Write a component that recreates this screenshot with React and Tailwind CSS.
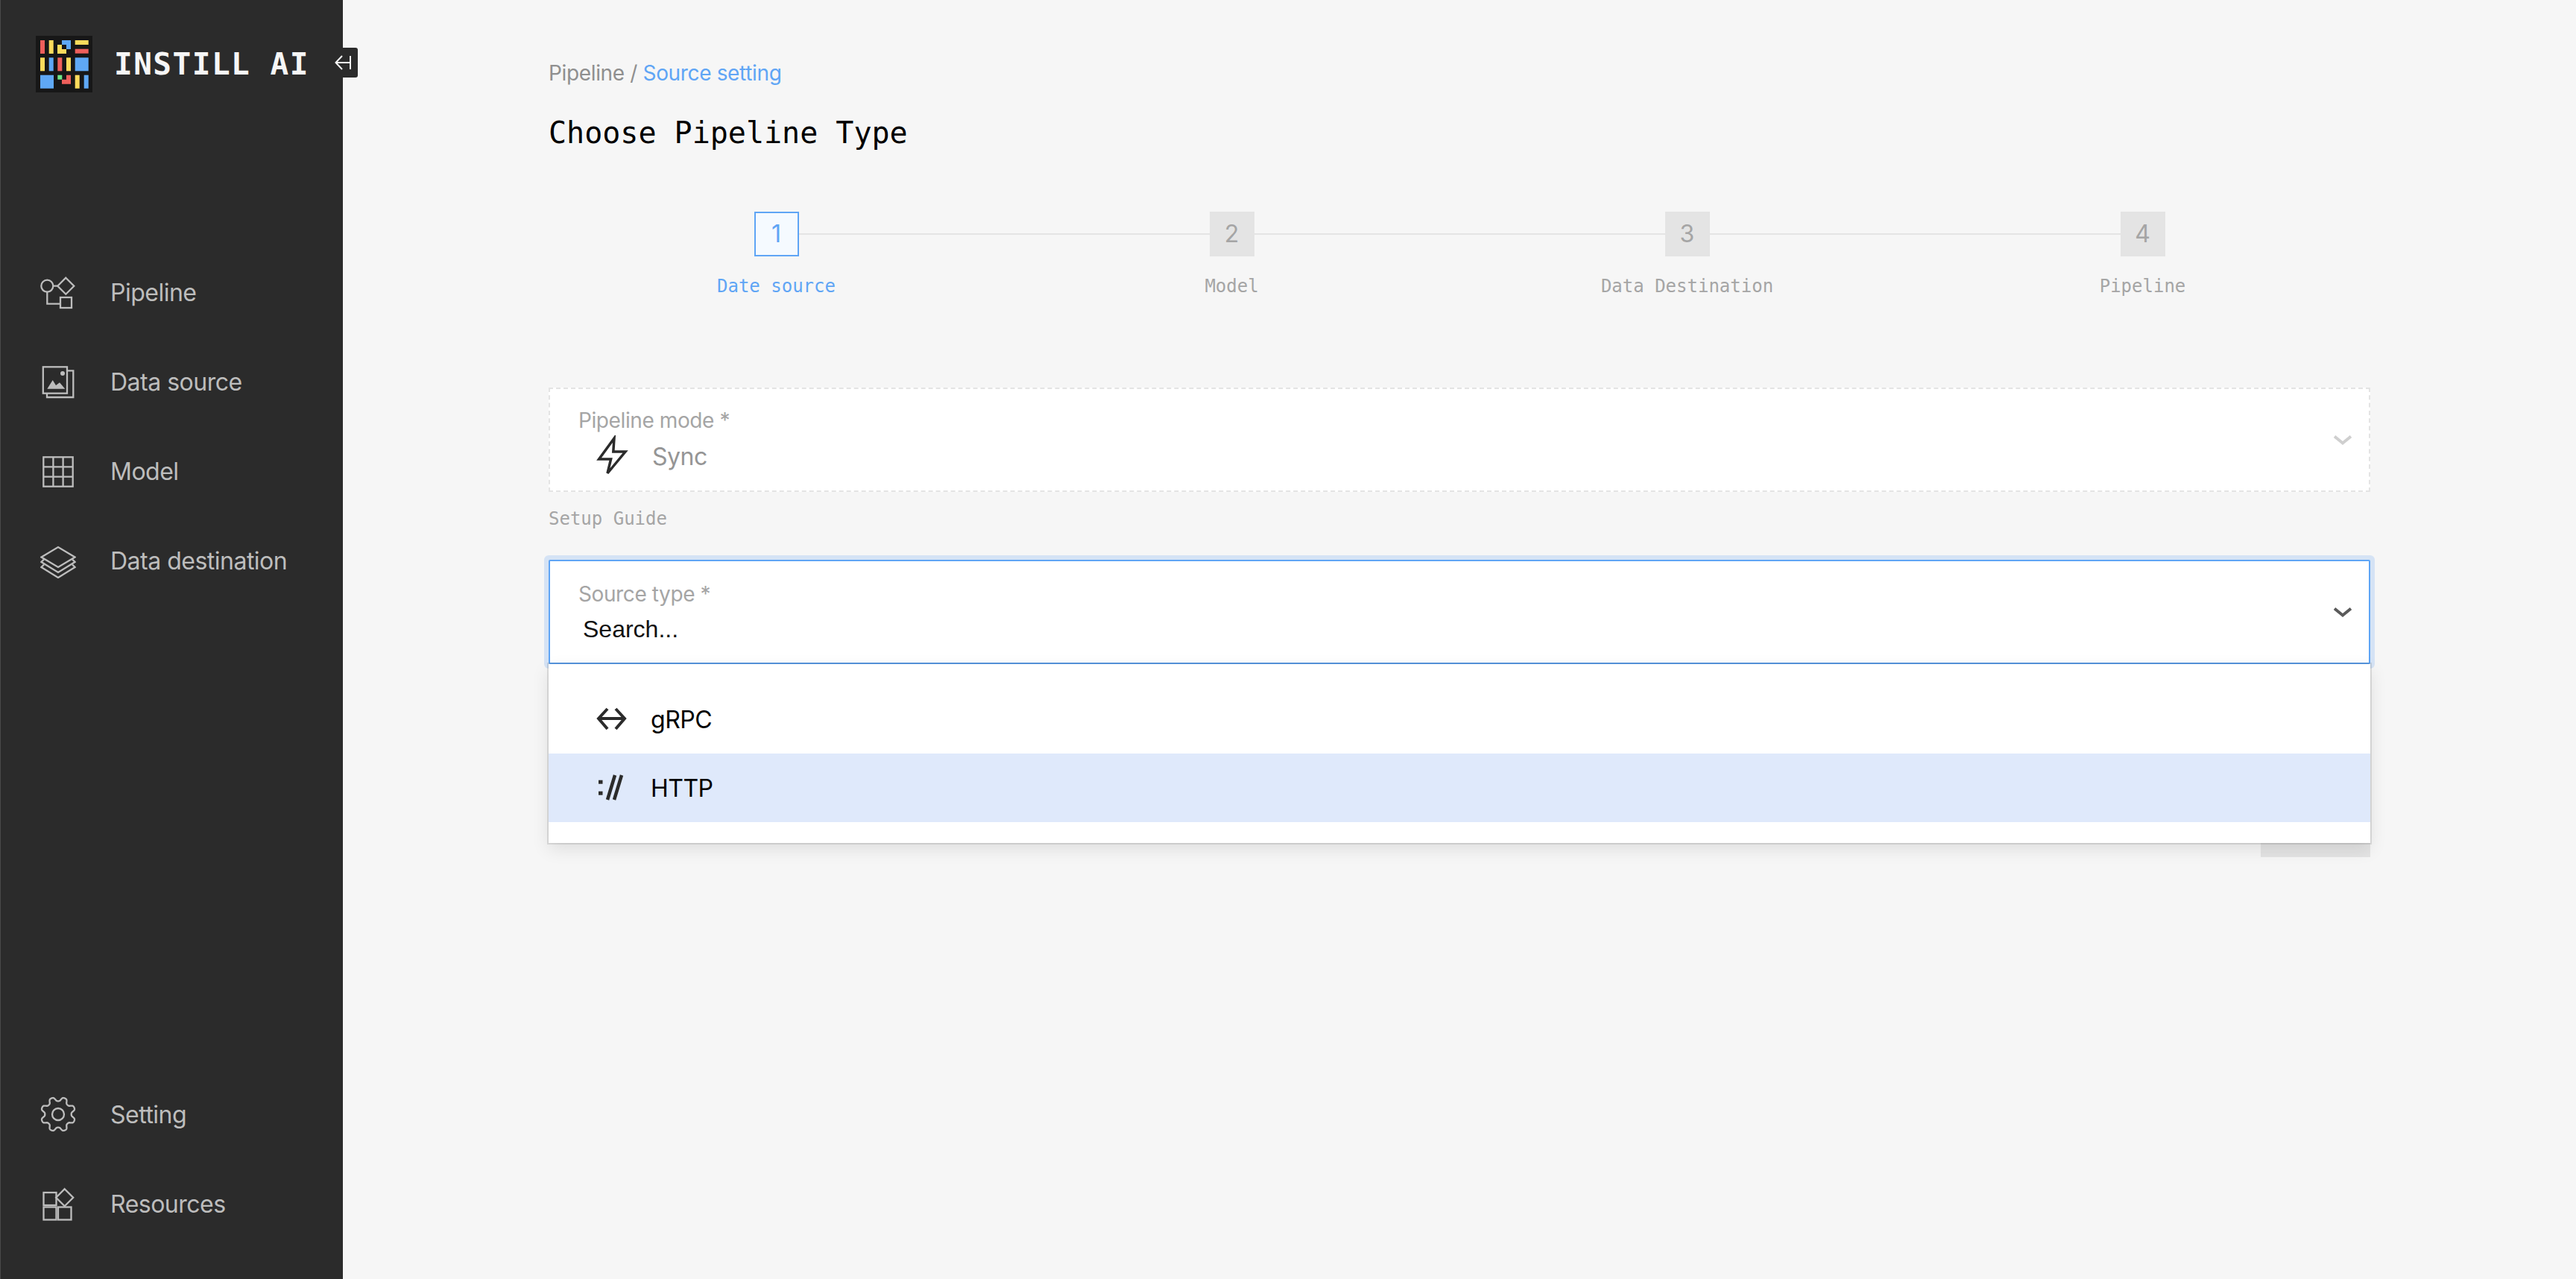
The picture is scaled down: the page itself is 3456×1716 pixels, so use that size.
import React from "react";

const gearPath = (() => {
  const pts = [];
  const teeth = 8;
  const total = 320;
  for (let i = 0; i < total; i++) {
    const t = (i / total) * Math.PI * 2;
    const a = t - Math.PI / 2;
    const wave = -Math.tanh(1.6 * Math.cos(teeth * t)) / Math.tanh(1.6);
    const r = 20.5 + 2.8 * wave;
    pts.push(`${(24 + r * Math.cos(a)).toFixed(2)} ${(24 + r * Math.sin(a)).toFixed(2)}`);
  }
  return `M${pts.join("L")}Z`;
})();

const Icon = ({ children }) => (
  <svg
    width="48"
    height="48"
    viewBox="0 0 48 48"
    fill="none"
    stroke="#bdbdbd"
    strokeWidth="2.3"
    className="shrink-0"
  >
    {children}
  </svg>
);

const PipelineIcon = () => (
  <Icon>
    <circle cx="9.3" cy="15.7" r="8" />
    <path d="M34.3 4.7L45.3 15.7L34.3 26.7L23.3 15.7Z" />
    <path d="M17.3 15.7H23.3M9.3 23.7V39.7H27" />
    <rect x="27" y="31" width="15" height="14" />
  </Icon>
);

const SourceIcon = () => (
  <Icon>
    <rect x="3.8" y="4.3" width="32.2" height="35.4" />
    <path d="M36 9.3H44.3V45H9V39.7" />
    <circle cx="30" cy="13" r="3" fill="#bdbdbd" stroke="none" />
    <path d="M9.3 33.7L16.7 22L21 29L26 25.3L33.3 33.7Z" fill="#bdbdbd" stroke="none" />
  </Icon>
);

const ModelIcon = () => (
  <Icon>
    <rect x="4.3" y="5.3" width="39.4" height="39.4" />
    <path d="M17.4 5.3V44.7M30.6 5.3V44.7M4.3 18.4H43.7M4.3 31.6H43.7" />
  </Icon>
);

const DestinationIcon = () => (
  <Icon>
    <path d="M1.5 19.5L24 6L46.5 19.5L24 33Z" />
    <path d="M5 22.5L1.5 26L24 40L46.5 26L43 22.5" />
    <path d="M5 29.5L1.5 33L24 47L46.5 33L43 29.5" />
  </Icon>
);

const SettingIcon = () => (
  <Icon>
    <path d={gearPath} strokeLinejoin="round" />
    <circle cx="24" cy="24" r="8" />
  </Icon>
);

const ResourcesIcon = () => (
  <Icon>
    <rect x="4.5" y="9" width="17" height="17" />
    <rect x="4.5" y="28.5" width="17" height="17" />
    <rect x="24" y="28.5" width="17.5" height="17" />
    <path d="M32.7 4.2L44.2 15.7L32.7 27.2L21.2 15.7Z" />
  </Icon>
);

const LogoMark = () => (
  <svg width="76" height="76" viewBox="0 0 76 76" className="shrink-0">
    <rect width="76" height="76" fill="#171717" />
    {/* row 1 */}
    <rect x="6" y="6" width="6" height="18" fill="#ee5f5b" />
    <rect x="17.7" y="6" width="6" height="18" fill="#fbdb5c" />
    <path d="M35 6H47V18H41V12H35Z" fill="#5fa8f5" />
    <path d="M29 12H35V18H41V24H29Z" fill="#fbdb5c" />
    <rect x="52.7" y="6" width="18" height="6" fill="#fbdb5c" />
    <rect x="52.7" y="17.7" width="18" height="6" fill="#ee5f5b" />
    {/* row 2 */}
    <rect x="6" y="29.3" width="6" height="18" fill="#fbdb5c" />
    <rect x="17.7" y="29.3" width="6" height="18" fill="#5fa8f5" />
    <rect x="29.3" y="29.3" width="6" height="18" fill="#ee5f5b" />
    <rect x="41" y="29.3" width="6" height="18" fill="#fbdb5c" />
    <rect x="52.7" y="29.3" width="18" height="18" fill="#5fa8f5" />
    {/* row 3 */}
    <rect x="6" y="52.7" width="18" height="18" fill="#5fa8f5" />
    <rect x="29.3" y="52.7" width="6" height="6" fill="#6fe886" />
    <path d="M41 52.7H47V64.7H35V58.7H41Z" fill="#ee5f5b" />
    <rect x="52.7" y="52.7" width="6" height="18" fill="#fbdb5c" />
    <rect x="64.7" y="52.7" width="6" height="18" fill="#5fa8f5" />
  </svg>
);

const Chevron = ({ color }) => (
  <svg width="24" height="16" viewBox="0 0 24 16" fill="none" stroke={color} strokeWidth="4" className="mt-[2px] shrink-0">
    <path d="M1 2.5L12 11.5L23 2.5" />
  </svg>
);

const NavItem = ({ icon, label }) => (
  <div className="flex h-[120px] items-center pl-[53px] text-[32px] tracking-[-0.5px] text-[#bdbdbd]">
    <div className="mr-[46px] flex w-[48px] justify-center">{icon}</div>
    <span className="pt-[2px]">{label}</span>
  </div>
);

const Step = ({ num, label, active, first, last }) => (
  <div className="flex flex-col items-center">
    <div className="flex w-full items-center">
      <div className={first ? "h-[2px] flex-1" : "h-[2px] flex-1 bg-[#e4e4e4]"} />
      <div
        className={
          active
            ? "flex h-[60px] w-[60px] items-center justify-center border-2 border-[#5fa5f5] bg-[#f5faff] text-[32px] text-[#5fa5f5]"
            : "flex h-[60px] w-[60px] items-center justify-center bg-[#e4e4e4] text-[32px] text-[#a5a5a5]"
        }
      >
        {num}
      </div>
      <div className={last ? "h-[2px] flex-1" : "h-[2px] flex-1 bg-[#e4e4e4]"} />
    </div>
    <p
      className={
        active
          ? "mt-[26px] font-['DejaVu_Sans_Mono',monospace] text-[24px] leading-[28px] text-[#5fa5f5]"
          : "mt-[26px] font-['DejaVu_Sans_Mono',monospace] text-[24px] leading-[28px] text-[#a5a5a5]"
      }
    >
      {label}
    </p>
  </div>
);

export default function App() {
  return (
    <div className="flex h-[1716px] w-full overflow-hidden bg-[#f6f6f6] font-['Inter',sans-serif]">
      {/* sidebar */}
      <aside className="relative flex w-[460px] shrink-0 flex-col justify-between border-l border-[#4a4a4a] bg-[#2b2b2b] pb-[41px]">
        <div>
          <div className="flex items-center pl-[47px] pt-[48px]">
            <LogoMark />
            <span className="ml-[29px] font-['DejaVu_Sans_Mono',monospace] text-[41px] font-bold leading-[76px] tracking-[1.5px] text-[#f6f6f6]">
              INSTILL AI
            </span>
          </div>
          <div className="mt-[208px]">
            <NavItem icon={<PipelineIcon />} label="Pipeline" />
            <NavItem icon={<SourceIcon />} label="Data source" />
            <NavItem icon={<ModelIcon />} label="Model" />
            <NavItem icon={<DestinationIcon />} label="Data destination" />
          </div>
        </div>
        <div>
          <NavItem icon={<SettingIcon />} label="Setting" />
          <NavItem icon={<ResourcesIcon />} label="Resources" />
        </div>
        <button className="absolute right-[-20px] top-[64px] flex h-[40px] w-[31px] items-center rounded-r-[3px] bg-[#2b2b2b]">
          <svg width="24" height="24" viewBox="0 0 24 24" fill="none" stroke="#f6f6f6" strokeWidth="2">
            <path d="M21 3V21M20 12H2M10 3L1.5 12L10 21" />
          </svg>
        </button>
      </aside>

      {/* main */}
      <main className="flex-1 px-[276px] pt-[81px]">
        <p className="text-[28px] leading-[34px] tracking-[-0.35px] text-[#8f8f8f]">
          Pipeline / <span className="text-[#5fa5f5]">Source setting</span>
        </p>
        <h1 className="mt-[39px] font-['DejaVu_Sans_Mono',monospace] text-[40px] leading-[48px] text-black">
          Choose Pipeline Type
        </h1>

        <div className="mt-[82px] grid grid-cols-4">
          <Step num="1" label="Date source" active first />
          <Step num="2" label="Model" />
          <Step num="3" label="Data Destination" />
          <Step num="4" label="Pipeline" last />
        </div>

        {/* pipeline mode */}
        <div className="mt-[122px] flex h-[140px] items-center justify-between border-2 border-dashed border-[#e4e4e4] bg-white pl-[38px] pr-[23px]">
          <div className="pt-[7px]">
            <p className="text-[28px] leading-[34px] tracking-[-0.4px] text-[#a5a5a5]">Pipeline mode *</p>
            <div className="mt-[3px] flex h-[56px] items-center pl-[24px]">
              <svg width="44" height="56" viewBox="0 0 44 56" fill="none" stroke="#2b2b2b" strokeWidth="3.5" className="shrink-0">
                <path d="M24 4L3.6 32H19.6L15 51L39 22H22.8Z" />
              </svg>
              <span className="ml-[31px] pt-[2px] text-[32px] tracking-[-0.5px] text-[#959595]">Sync</span>
            </div>
          </div>
          <Chevron color="#cfcfcf" />
        </div>

        <p className="mt-[22px] font-['DejaVu_Sans_Mono',monospace] text-[24px] leading-[28px] text-[#a5a5a5]">
          Setup Guide
        </p>

        {/* source type select + open menu */}
        <div className="relative mt-[41px]">
          <div className="flex h-[140px] items-center justify-between rounded-[2px] border-2 border-[#5fa5f5] bg-white pl-[38px] pr-[23px] shadow-[0_0_0_6px_#d5e3f5]">
            <div>
              <p className="text-[28px] leading-[34px] tracking-[-0.4px] text-[#a5a5a5]">Source type *</p>
              <p className="mt-[11px] pl-[6px] font-['Liberation_Sans',sans-serif] text-[32px] leading-[38px] text-[#111111]">
                Search...
              </p>
            </div>
            <Chevron color="#5a5a5a" />
          </div>
          <div className="absolute left-0 right-0 top-full z-10 bg-white py-[28px] text-[32px] tracking-[-0.5px] text-black shadow-[0_0_0_2px_rgba(0,0,0,0.1),0_8px_22px_rgba(0,0,0,0.1)]">
            <div className="flex h-[92px] items-center pl-[64px]">
              <svg width="44" height="32" viewBox="0 0 44 32" fill="none" stroke="#2b2b2b" strokeWidth="4" className="shrink-0">
                <path d="M3 15H38M15 2L3 15L15 29M26 2L38 15L26 29" />
              </svg>
              <span className="ml-[29px] pt-[2px]">gRPC</span>
            </div>
            <div className="flex h-[92px] items-center bg-[#dfe9fb] pl-[64px]">
              <svg width="44" height="38" viewBox="0 0 44 38" fill="none" stroke="#2b2b2b" strokeWidth="4.5" className="shrink-0">
                <rect x="3" y="8.7" width="5.5" height="5" fill="#2b2b2b" stroke="none" />
                <rect x="3" y="23.7" width="5.5" height="5" fill="#2b2b2b" stroke="none" />
                <path d="M15 35L25 2M24 35L34 2" />
              </svg>
              <span className="ml-[29px] pt-[2px]">HTTP</span>
            </div>
          </div>
        </div>

        <div className="mt-[179px] flex justify-end">
          <button className="h-[80px] w-[147px] bg-[#e4e4e4]" />
        </div>
      </main>
    </div>
  );
}
